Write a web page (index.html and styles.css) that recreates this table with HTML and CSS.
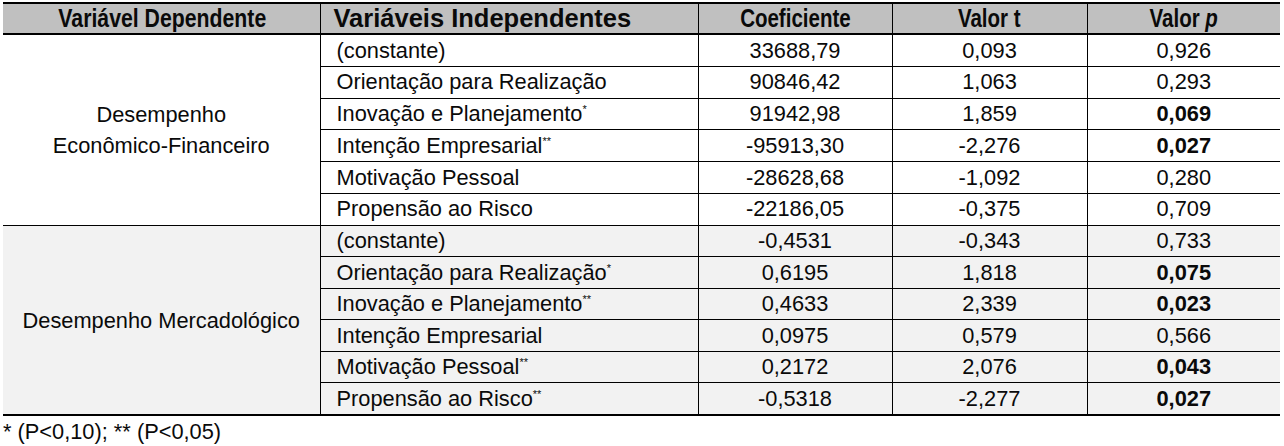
FILE: index.html
```html
<!DOCTYPE html>
<html lang="pt">
<head>
<meta charset="utf-8">
<title>Regressão</title>
<link rel="stylesheet" href="styles.css">
</head>
<body>
<table class="reg">
  <colgroup>
    <col class="c1"><col class="c2"><col class="c3"><col class="c4"><col class="c5">
  </colgroup>
  <thead>
    <tr>
      <th class="dep-h"><span class="sx sx-dep">Variável Dependente</span></th>
      <th class="left">Variáveis Independentes</th>
      <th><span class="sx sx-num">Coeficiente</span></th>
      <th><span class="sx sx-num">Valor t</span></th>
      <th><span class="sx sx-num">Valor <i>p</i></span></th>
    </tr>
  </thead>
  <tbody class="g1">
    <tr><td class="dep" rowspan="6">Desempenho<br>Econômico-Financeiro</td><td class="left">(constante)</td><td>33688,79</td><td>0,093</td><td>0,926</td></tr>
    <tr><td class="left">Orientação para Realização</td><td>90846,42</td><td>1,063</td><td>0,293</td></tr>
    <tr><td class="left">Inovação e Planejamento<sup>*</sup></td><td>91942,98</td><td>1,859</td><td><b>0,069</b></td></tr>
    <tr><td class="left">Intenção Empresarial<sup>**</sup></td><td>-95913,30</td><td>-2,276</td><td><b>0,027</b></td></tr>
    <tr><td class="left">Motivação Pessoal</td><td>-28628,68</td><td>-1,092</td><td>0,280</td></tr>
    <tr><td class="left">Propensão ao Risco</td><td>-22186,05</td><td>-0,375</td><td>0,709</td></tr>
  </tbody>
  <tbody class="g2">
    <tr><td class="dep" rowspan="6">Desempenho Mercadológico</td><td class="left">(constante)</td><td>-0,4531</td><td>-0,343</td><td>0,733</td></tr>
    <tr><td class="left">Orientação para Realização<sup>*</sup></td><td>0,6195</td><td>1,818</td><td><b>0,075</b></td></tr>
    <tr><td class="left">Inovação e Planejamento<sup>**</sup></td><td>0,4633</td><td>2,339</td><td><b>0,023</b></td></tr>
    <tr><td class="left">Intenção Empresarial</td><td>0,0975</td><td>0,579</td><td>0,566</td></tr>
    <tr><td class="left">Motivação Pessoal<sup>**</sup></td><td>0,2172</td><td>2,076</td><td><b>0,043</b></td></tr>
    <tr><td class="left">Propensão ao Risco<sup>**</sup></td><td>-0,5318</td><td>-2,277</td><td><b>0,027</b></td></tr>
  </tbody>
</table>
<p class="note">* (P&lt;0,10); ** (P&lt;0,05)</p>
</body>
</html>
```

FILE: styles.css
```css
html, body {
  margin: 0;
  padding: 0;
  background: #ffffff;
}
body {
  padding: 2px 0 0 3px;
  font-family: "Liberation Sans", Arial, sans-serif;
  color: #0a0a0a;
}
.reg {
  border-collapse: collapse;
  table-layout: fixed;
  width: 1277px;
  font-size: 21.8px;
}
.c1 { width: 317px; }
.c2 { width: 378px; }
.c3 { width: 194px; }
.c4 { width: 195px; }
.c5 { width: 193px; }

.reg th {
  background: #c0c0c0;
  font-weight: bold;
  font-size: 25px;
  height: 29px;
  padding: 0 4px;
  text-align: center;
  border-top: 2px solid #000;
  border-bottom: 2px solid #000;
  border-left: 1.5px solid #000;
  border-right: 1.5px solid #000;
  line-height: 1;
  white-space: nowrap;
  overflow: hidden;
}
.reg th:first-child { border-left: none; }
.reg th:last-child { border-right: none; }
.reg th.dep-h { padding: 0 0 0 2px; }
.reg th.left {
  text-align: left;
  padding-left: 13px;
  font-size: 25.5px;
}
.sx {
  display: inline-block;
  transform-origin: 50% 50%;
}
.sx-dep { transform: scaleX(0.85); }
.sx-num { transform: scaleX(0.82); }

.reg td {
  text-align: center;
  padding: 0 4px;
  border: 1px solid #000;
  border-left-width: 1.5px;
  line-height: 1;
  white-space: nowrap;
}
.reg td:last-child { border-right: none; }
.reg td.left { text-align: left; padding-left: 16px; }
.reg td.dep {
  border-left: none;
  white-space: normal;
  line-height: 31px;
  padding-top: 1px;
}
.reg b { font-weight: bold; }

.g1 td { height: 30.8px; background: #ffffff; }
.g2 td { height: 30.5px; background: #f2f2f2; }
.g1 tr:last-child td, .g1 td.dep { border-bottom: 1.5px solid #000; }
.g2 tr:last-child td, .g2 td.dep { border-bottom: 2px solid #000; }

sup {
  font-size: 11px;
  vertical-align: 8px;
  line-height: 0;
}

.note {
  margin: 4px 0 0 0;
  font-size: 21.8px;
  line-height: 24px;
}
```
